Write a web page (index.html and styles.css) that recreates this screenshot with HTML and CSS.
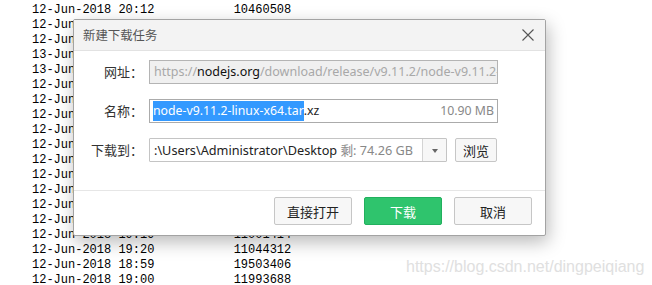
FILE: index.html
```html
<!DOCTYPE html>
<html lang="zh-CN">

<head>
    <meta charset="UTF-8">
    <title>新建下载任务</title>
    <link rel="stylesheet" href="styles.css">
</head>

<body>
    <pre class="listing">12-Jun-2018 20:09           10460112
12-Jun-2018 20:12           10460508
12-Jun-2018 20:12           17225312
12-Jun-2018 20:09           17228204
13-Jun-2018 00:28           16011264
13-Jun-2018 00:28           16012516
12-Jun-2018 19:22           10906768
12-Jun-2018 19:24           10965600
12-Jun-2018 19:15           11013876
12-Jun-2018 19:17           11048892
12-Jun-2018 19:03           16010232
12-Jun-2018 19:04           16013148
12-Jun-2018 19:21           10980140
12-Jun-2018 19:23           11004548
12-Jun-2018 19:22           11427888
12-Jun-2018 19:24           11455272
12-Jun-2018 19:19           11001414
12-Jun-2018 19:20           11044312
12-Jun-2018 18:59           19503406
12-Jun-2018 19:00           11993688</pre>

    <div class="watermark">https://blog.csdn.net/dingpeiqiang</div>

    <section class="dialog">
        <header class="dialog-title">
            <span>新建下载任务</span>
            <svg class="close" width="12" height="12" viewBox="0 0 12 12">
                <path d="M0.5 0.5 L11.5 11.5 M11.5 0.5 L0.5 11.5" stroke="#555" stroke-width="1.1" fill="none" />
            </svg>
        </header>

        <div class="dialog-body">
            <label class="label">网址：</label>
            <div class="field field-disabled">https://<b>nodejs.org</b>/download/release/v9.11.2/node-v9.11.2-linux-x64.tar.xz</div>

            <label class="label">名称：</label>
            <div class="field field-name">
                <span><span class="selected">node-v9.11.2-linux-x64.tar</span>.xz</span>
                <span class="muted">10.90 MB</span>
            </div>

            <label class="label">下载到：</label>
            <div class="path-row">
                <div class="combo">
                    <span class="combo-text">:\Users\Administrator\Desktop <span class="muted">剩: 74.26 GB</span></span>
                    <span class="combo-arrow"></span>
                </div>
                <button class="btn btn-small" type="button">浏览</button>
            </div>
        </div>

        <footer class="dialog-footer">
            <button class="btn" type="button">直接打开</button>
            <button class="btn btn-green" type="button">下载</button>
            <button class="btn" type="button">取消</button>
        </footer>
    </section>
</body>

</html>
```

FILE: styles.css
```css
body {
    margin: 0;
    padding: 0;
    background: #fff;
    width: 652px;
    height: 285px;
    overflow: hidden;
    position: relative;
}

.listing {
    margin: -12px 0 0 32px;
    font-family: "Liberation Mono", monospace;
    font-size: 12px;
    line-height: 15px;
    color: #000;
}

.watermark {
    position: absolute;
    left: 406px;
    top: 258px;
    font-family: "Liberation Sans", Arial, sans-serif;
    font-size: 16px;
    color: #e0e0e0;
}

.dialog {
    position: absolute;
    left: 73px;
    top: 19px;
    width: 473px;
    height: 217px;
    box-sizing: border-box;
    border: 1px solid #a3a3a3;
    border-radius: 2px;
    background: #fff;
    box-shadow: 2px 6px 18px rgba(0, 0, 0, 0.28);
    font-family: "Noto Sans", "Noto Sans CJK SC", sans-serif;
    font-size: 12.3px;
    display: flex;
    flex-direction: column;
}

.dialog-title {
    height: 30px;
    background: #f3f3f3;
    border-bottom: 1px solid #e2e2e2;
    display: flex;
    align-items: center;
    justify-content: space-between;
    padding: 0 11px 0 9px;
    color: #555;
    font-family: "Noto Sans CJK SC", sans-serif;
    font-size: 12.4px;
}

.dialog-body {
    display: grid;
    grid-template-columns: 69px 349px;
    column-gap: 6px;
    row-gap: 15px;
    padding-top: 9px;
    height: 139px;
    box-sizing: border-box;
    align-content: start;
}

.label {
    text-align: right;
    color: #333;
    line-height: 24px;
    font-family: "Noto Sans CJK TC", sans-serif;
    font-size: 13px;
}

.field {
    height: 24px;
    box-sizing: border-box;
    border: 1px solid #ababab;
    line-height: 20px;
    padding: 1px 3px 1px 3px;
    white-space: nowrap;
    overflow: hidden;
    color: #222;
}

.field-disabled {
    background: #f0f0f0;
    color: #a8a8a8;
    padding-left: 4px;
    border-color: #b4b4b4;
    font-size: 12.5px;
}

.field-disabled b {
    font-weight: normal;
    color: #111;
}

.field-name {
    display: flex;
    justify-content: space-between;
    padding-right: 3px;
}

.selected {
    background: #3399ff;
    color: #fff;
    display: inline-block;
}

.muted {
    color: #888;
}

.path-row {
    display: flex;
    gap: 8px;
}

.combo {
    width: 298px;
    height: 24px;
    box-sizing: border-box;
    border: 1px solid #c4c4c4;
    border-radius: 1px;
    display: flex;
    color: #222;
    font-size: 12.7px;
}

.combo-text {
    flex: 1;
    line-height: 22px;
    padding-left: 4px;
    white-space: nowrap;
    overflow: hidden;
}

.combo-arrow {
    width: 23px;
    border-left: 1px solid #d4d4d4;
    background: #f7f7f7;
    display: flex;
    align-items: center;
    justify-content: center;
}

.combo-arrow::after {
    content: "";
    border-left: 3px solid transparent;
    border-right: 3px solid transparent;
    border-top: 4px solid #666;
    margin-top: 1px;
}

.btn {
    width: 78px;
    height: 28px;
    box-sizing: border-box;
    border: 1px solid #c6c6c6;
    border-radius: 2px;
    background: #f7f7f7;
    color: #222;
    font-family: "Noto Sans CJK SC", sans-serif;
    font-size: 13px;
    padding: 0;
}

.btn-small {
    width: 42px;
    height: 24px;
}

.btn-green {
    background: #2fc46d;
    border-color: #22b05e;
    color: #fff;
}

.dialog-footer {
    border-top: 1px solid #e6e6e6;
    display: flex;
    justify-content: flex-end;
    gap: 12px;
    padding: 6px 13px 0 0;
    flex: 1;
}
```
